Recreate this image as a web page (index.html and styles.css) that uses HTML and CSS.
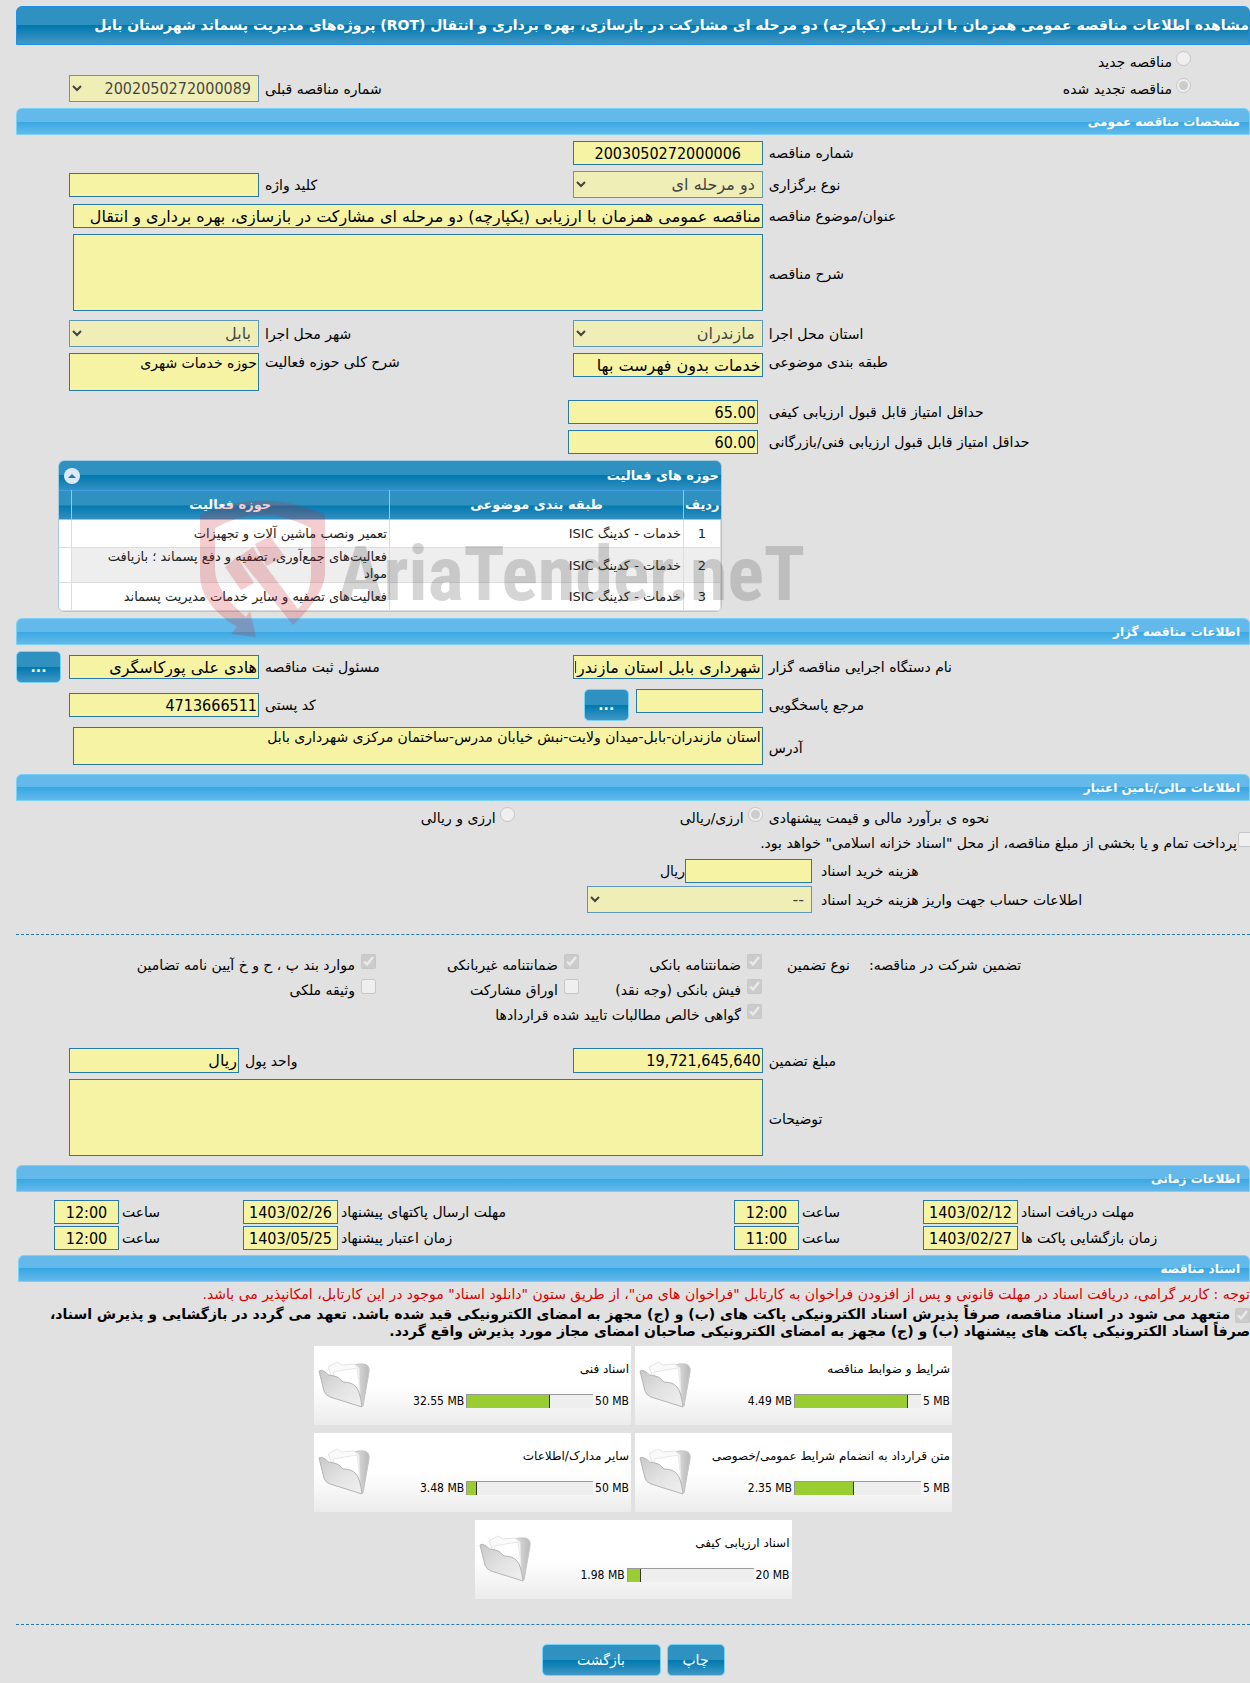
FILE: index.html
```html
<!DOCTYPE html>
<html lang="fa" dir="rtl">
<head>
  <meta charset="UTF-8">
  <title>مشاهده اطلاعات مناقصه</title>
  <meta name="viewport" content="width=device-width, initial-scale=1">
  <link rel="stylesheet" href="styles.css">
</head>
<body>
<main class="page">
  <h1 class="page-title">مشاهده اطلاعات مناقصه عمومی همزمان با ارزیابی (یکپارچه) دو مرحله ای مشارکت در بازسازی، بهره برداری و انتقال (ROT) پروژه‌های مدیریت پسماند شهرستان بابل</h1>

  <!-- نوع مناقصه -->
  <div class="form kind">
    <label class="opt"><input type="radio" name="kind" disabled><span>مناقصه جدید</span></label>
  </div>
  <div class="form kind renewed">
    <label class="opt"><input type="radio" name="kind" checked disabled><span>مناقصه تجدید شده</span></label>
    <label class="lbl second" for="prevNo">شماره مناقصه قبلی</label>
    <select class="num" id="prevNo" disabled><option>2002050272000089</option></select>
  </div>

  <h2 class="section">مشخصات مناقصه عمومی</h2>
  <div class="form">
    <label class="lbl" for="tenderNo">شماره مناقصه</label>
    <input class="num center" id="tenderNo" type="text" value="2003050272000006" readonly>

    <label class="lbl" for="holdType">نوع برگزاری</label>
    <select id="holdType" disabled><option>دو مرحله ای</option></select>
    <label class="lbl second" for="keyword">کلید واژه</label>
    <input id="keyword" type="text" readonly>

    <label class="lbl" for="subject">عنوان/موضوع مناقصه</label>
    <div class="wide"><input id="subject" type="text" value="مناقصه عمومی همزمان با ارزیابی (یکپارچه) دو مرحله ای مشارکت در بازسازی، بهره برداری و انتقال" readonly></div>

    <label class="lbl" for="descr">شرح مناقصه</label>
    <div class="wide"><textarea class="tall" id="descr" readonly></textarea></div>

    <label class="lbl" for="province">استان محل اجرا</label>
    <select id="province" disabled><option>مازندران</option></select>
    <label class="lbl second" for="city">شهر محل اجرا</label>
    <select id="city" disabled><option>بابل</option></select>

    <label class="lbl top" for="topic">طبقه بندی موضوعی</label>
    <input class="top" id="topic" type="text" value="خدمات بدون فهرست بها" readonly>
    <label class="lbl second top" for="field">شرح کلی حوزه فعالیت</label>
    <textarea class="short" id="field" readonly>حوزه خدمات شهری</textarea>

    <label class="lbl" for="minQuality">حداقل امتیاز قابل قبول ارزیابی کیفی</label>
    <input class="num score" id="minQuality" type="text" value="65.00" readonly>

    <label class="lbl" for="minTech">حداقل امتیاز قابل قبول ارزیابی فنی/بازرگانی</label>
    <input class="num score" id="minTech" type="text" value="60.00" readonly>
  </div>

  <!-- حوزه های فعالیت -->
  <div class="grid-box">
    <div class="grid-title">
      <span>حوزه های فعالیت</span>
      <button type="button" class="collapse" aria-label="بستن">
        <svg width="16" height="16" viewBox="0 0 16 16"><circle cx="8" cy="8" r="8" fill="#dbe9f9"/><path d="M4 10l4-4 4 4z" fill="#2779aa"/></svg>
      </button>
    </div>
    <table>
      <thead>
        <tr><th class="c-no">ردیف</th><th class="c-topic">طبقه بندی موضوعی</th><th>حوزه فعالیت</th><th class="c-end"></th></tr>
      </thead>
      <tbody>
        <tr><td class="c-no">1</td><td>خدمات - کدینگ ISIC</td><td>تعمیر ونصب ماشین آلات و تجهیزات</td><td class="c-end"></td></tr>
        <tr class="even"><td class="c-no">2</td><td>خدمات - کدینگ ISIC</td><td>فعالیت‌های جمع‌آوری، تصفیه و دفع پسماند ؛ بازیافت<br>مواد</td><td class="c-end"></td></tr>
        <tr><td class="c-no">3</td><td>خدمات - کدینگ ISIC</td><td>فعالیت‌های تصفیه و سایر خدمات مدیریت پسماند</td><td class="c-end"></td></tr>
      </tbody>
    </table>
    <div class="watermark" dir="ltr">
      <svg width="126" height="140" viewBox="0 0 126 140">
        <path fill="#cc2229" d="M0 15Q62-14 125 15V75C124 88 112 108 93 125L44 64 58 56 98 109Q111 96 111 72V28Q62 2 15 28V70Q16 92 46 117L50 111 56 137 31 134 37 127Q0 104 0 75Z"/>
        <path fill="#cc2229" d="M25 67L37 57 54 83 41 90ZM40 56L53 47 61 61 48 69ZM55 44L70 36 85 57 66 66Z"/>
      </svg>
      <span>AriaTender.neT</span>
    </div>
  </div>

  <h2 class="section">اطلاعات مناقصه گزار</h2>
  <div class="form">
    <label class="lbl" for="org">نام دستگاه اجرایی مناقصه گزار</label>
    <input id="org" type="text" value="شهرداری بابل استان مازندران" readonly>
    <label class="lbl second" for="registrar">مسئول ثبت مناقصه</label>
    <input id="registrar" type="text" value="هادی علی پورکاسگری" readonly>
    <button type="button" class="btn more">...</button>

    <label class="lbl" for="contact">مرجع پاسخگویی</label>
    <div class="contact">
      <input id="contact" type="text" readonly>
      <button type="button" class="btn more">...</button>
    </div>
    <label class="lbl second" for="postal">کد پستی</label>
    <input class="num" id="postal" type="text" value="4713666511" readonly>

    <label class="lbl" for="address">آدرس</label>
    <div class="wide"><textarea class="short" id="address" readonly>استان مازندران-بابل-میدان ولایت-نبش خیابان مدرس-ساختمان مرکزی شهرداری بابل</textarea></div>
  </div>

  <h2 class="section">اطلاعات مالی/تامین اعتبار</h2>
  <div class="form method">
    <span class="lbl">نحوه ی برآورد مالی و قیمت پیشنهادی</span>
    <label class="opt"><input type="radio" name="cur" checked disabled><span>ارزی/ریالی</span></label>
    <label class="opt"><input type="radio" name="cur" disabled><span>ارزی و ریالی</span></label>
  </div>
  <label class="opt treasury"><input type="checkbox" disabled><span>پرداخت تمام و یا بخشی از مبلغ مناقصه، از محل "اسناد خزانه اسلامی" خواهد بود.</span></label>
  <div class="form cost">
    <label class="lbl" for="docCost">هزینه خرید اسناد</label>
    <div class="money"><input id="docCost" type="text" readonly><span>ریال</span></div>
    <label class="lbl" for="account">اطلاعات حساب جهت واریز هزینه خرید اسناد</label>
    <select id="account" disabled><option>--</option></select>
  </div>
  <hr>

  <div class="guarantee">
    <div class="kinds"><span>تضمین شرکت در مناقصه:</span><span>نوع تضمین</span></div>
    <div class="checks">
      <label class="opt"><input type="checkbox" checked disabled><span>ضمانتنامه بانکی</span></label>
      <label class="opt"><input type="checkbox" checked disabled><span>ضمانتنامه غیربانکی</span></label>
      <label class="opt"><input type="checkbox" checked disabled><span>موارد بند پ ، ح و خ آیین نامه تضامین</span></label>
      <label class="opt"><input type="checkbox" checked disabled><span>فیش بانکی (وجه نقد)</span></label>
      <label class="opt"><input type="checkbox" disabled><span>اوراق مشارکت</span></label>
      <label class="opt"><input type="checkbox" disabled><span>وثیقه ملکی</span></label>
      <label class="opt full"><input type="checkbox" checked disabled><span>گواهی خالص مطالبات تایید شده قراردادها</span></label>
    </div>
  </div>
  <div class="form amounts">
    <label class="lbl" for="amount">مبلغ تضمین</label>
    <input class="num" id="amount" type="text" value="19,721,645,640" readonly>
    <label class="lbl second" for="unit">واحد پول</label>
    <input id="unit" type="text" value="ریال" readonly>
    <label class="lbl" for="notes">توضیحات</label>
    <div class="wide full-width"><textarea class="tall" id="notes" readonly></textarea></div>
  </div>

  <h2 class="section">اطلاعات زمانی</h2>
  <div class="times">
    <label for="d1">مهلت دریافت اسناد</label><input class="num" id="d1" type="text" value="1403/02/12" readonly>
    <label for="t1">ساعت</label><input class="num" id="t1" type="text" value="12:00" readonly>
    <label for="d2">مهلت ارسال پاکتهای پیشنهاد</label><input class="num" id="d2" type="text" value="1403/02/26" readonly>
    <label for="t2">ساعت</label><input class="num" id="t2" type="text" value="12:00" readonly>
    <label for="d3">زمان بازگشایی پاکت ها</label><input class="num" id="d3" type="text" value="1403/02/27" readonly>
    <label for="t3">ساعت</label><input class="num" id="t3" type="text" value="11:00" readonly>
    <label for="d4">زمان اعتبار پیشنهاد</label><input class="num" id="d4" type="text" value="1403/05/25" readonly>
    <label for="t4">ساعت</label><input class="num" id="t4" type="text" value="12:00" readonly>
  </div>

  <h2 class="section docs-head">اسناد مناقصه</h2>
  <p class="notice">توجه : کاربر گرامی، دریافت اسناد در مهلت قانونی و پس از افزودن فراخوان به کارتابل "فراخوان های من"، از طریق ستون "دانلود اسناد" موجود در این کارتابل، امکانپذیر می باشد.</p>
  <label class="commit"><input type="checkbox" checked disabled> متعهد می شود در اسناد مناقصه، صرفاً پذیرش اسناد الکترونیکی پاکت های (ب) و (ج) مجهز به امضای الکترونیکی قید شده باشد. تعهد می گردد در بازگشایی و پذیرش اسناد،<br>صرفاً اسناد الکترونیکی پاکت های پیشنهاد (ب) و (ج) مجهز به امضای الکترونیکی صاحبان امضای مجاز مورد پذیرش واقع گردد.</label>

  <!-- پوشه های اسناد -->
  <svg class="defs" width="0" height="0" aria-hidden="true">
    <defs>
      <linearGradient id="front" x1="0" y1="0" x2="1" y2="1">
        <stop offset="0" stop-color="#c8c8c8"/><stop offset="0.5" stop-color="#e2e2e2"/><stop offset="1" stop-color="#f0f0f0"/>
      </linearGradient>
      <linearGradient id="spine" x1="0" y1="0" x2="1" y2="0">
        <stop offset="0" stop-color="#e8e8e8"/><stop offset="1" stop-color="#b8b8b8"/>
      </linearGradient>
      <symbol id="folder" viewBox="0 0 52 48">
        <path d="M34 6Q40 3 46 4Q52 5 51 12L45 46 38 42Z" fill="url(#spine)" stroke="#c4c4c4"/>
        <path d="M10 7L19 2 24 5 36 4 41 8 42 34 20 32Z" fill="#fafafa" stroke="#e4e4e4"/>
        <path d="M15 12L39 8Q42 22 41 36L20 34Z" fill="#fff" stroke="#e8e8e8"/>
        <path d="M1 11Q3 9 7 12Q10 16 16 16Q20 16 25 22Q34 22 38 27Q42 31 44 47L12 37Q7 35 6 31Z" fill="url(#front)" stroke="#b4b4b4"/>
      </symbol>
    </defs>
  </svg>
  <div class="docs">
    <a class="doc" href="#">
      <svg class="folder"><use href="#folder"/></svg>
      <span class="doc-name">شرایط و ضوابط مناقصه</span>
      <span class="usage"><span>4.49 MB</span><span class="bar"><i style="width:90%"></i></span><span>5 MB</span></span>
    </a>
    <a class="doc" href="#">
      <svg class="folder"><use href="#folder"/></svg>
      <span class="doc-name">اسناد فنی</span>
      <span class="usage"><span>32.55 MB</span><span class="bar"><i style="width:66%"></i></span><span>50 MB</span></span>
    </a>
    <a class="doc" href="#">
      <svg class="folder"><use href="#folder"/></svg>
      <span class="doc-name">متن قرارداد به انضمام شرایط عمومی/خصوصی</span>
      <span class="usage"><span>2.35 MB</span><span class="bar"><i style="width:47%"></i></span><span>5 MB</span></span>
    </a>
    <a class="doc" href="#">
      <svg class="folder"><use href="#folder"/></svg>
      <span class="doc-name">سایر مدارک/اطلاعات</span>
      <span class="usage"><span>3.48 MB</span><span class="bar"><i style="width:8%"></i></span><span>50 MB</span></span>
    </a>
    <a class="doc" href="#">
      <svg class="folder"><use href="#folder"/></svg>
      <span class="doc-name">اسناد ارزیابی کیفی</span>
      <span class="usage"><span>1.98 MB</span><span class="bar"><i style="width:11%"></i></span><span>20 MB</span></span>
    </a>
  </div>
  <hr>

  <div class="actions">
    <button type="button" class="btn print">چاپ</button>
    <button type="button" class="btn back">بازگشت</button>
  </div>
</main>
</body>
</html>
```
FILE: styles.css
```css
* { box-sizing: border-box; }
body {
  margin: 0;
  background: #e1e1e1;
  color: #000;
  font-family: "DejaVu Sans", sans-serif;
  font-size: 14px;
  line-height: 18px;
}
.page { padding: 6px 0 6px 16px; overflow: hidden; }
.page-title {
  margin: 0;
  height: 39px;
  line-height: 36px;
  border: 1px solid #1e90e8;
  border-radius: 6px 6px 0 0;
  background: linear-gradient(#2f91bf 50%, #0078ae 50%, #4398c6);
  color: #fff;
  font-size: 14px;
  white-space: nowrap;
}
.section {
  margin: 6px 0;
  height: 27px;
  line-height: 26px;
  padding: 0 9px;
  border: 1px solid #78d2f8;
  border-radius: 6px 6px 0 0;
  background: linear-gradient(#63b9ea 50%, #38a7e2 50%, #64b9ea);
  color: #fff;
  font-size: 12px;
}

/* form grid */
.form {
  display: grid;
  grid-template-columns: 39% 190px 1fr 190px 47px;
  gap: 6px;
  align-items: center;
}
.lbl { grid-column: 1; text-align: left; }
.second { grid-column: 3; }
.wide { grid-column: 2 / 5; padding-left: 4px; }
.full-width { padding-left: 0; }
.top { align-self: start; }

input[type="text"], textarea, select {
  display: block;
  width: 100%;
  height: 24px;
  margin: 0;
  padding: 0 1px;
  border: 1px solid #2779aa;
  border-radius: 0;
  background: #f6f4a4;
  color: #000;
  font-family: inherit;
  font-size: 16px;
  resize: none;
}
textarea { font-size: 14px; line-height: 18px; }
textarea.tall { height: 77px; margin-bottom: 3px; }
textarea.short { height: 38px; margin-bottom: 3px; }
select { height: 27px; padding: 0 3px; opacity: 0.7; }
input.num, select.num { font-family: "DejaVu Sans Condensed", "DejaVu Sans", sans-serif; }
.center { text-align: center; }
.form .score { margin-right: 5px; }

.opt { display: flex; gap: 4px; line-height: 22px; }
input[type="radio"], input[type="checkbox"] {
  width: 15px;
  height: 15px;
  margin: 0;
  flex: none;
}
.kind { margin-top: 6px; }
.kind .opt { padding-right: 59px; }
.kind.renewed { margin-top: 2px; }

/* activity grid */
.grid-box {
  position: relative;
  width: 664px;
  margin: 6px auto 0 42px;
  border: 1px solid #a6c9e2;
  border-radius: 6px;
  background: #fff;
  font-size: 13px;
}
.grid-title {
  display: flex;
  align-items: center;
  justify-content: space-between;
  height: 29px;
  padding: 0 2px 0 5px;
  border-radius: 5px 5px 0 0;
  background: linear-gradient(#2f91bf 50%, #0078ae 50%, #3490c2);
  color: #fff;
  font-weight: bold;
}
.collapse { padding: 0; border: 0; background: none; height: 16px; }
.grid-box table { width: 100%; border-collapse: collapse; table-layout: fixed; }
.grid-box th {
  height: 29px;
  padding: 0;
  border-left: 1px solid #78d2f8;
  border-bottom: 1px solid #78d2f8;
  border-top: 1px solid #3f9fe0;
  background: linear-gradient(#2f91bf 50%, #0078ae 50%, #3490c2);
  color: #fff;
}
.grid-box td { height: 28px; padding: 0 2px; line-height: 17px; border: 1px solid #ddd; color: #222; }
.grid-box .even td { background: #eee; }
.grid-box .even .c-end { background: #fff; }
.grid-box .c-no { width: 37px; text-align: center; }
.grid-box .c-topic { width: 294px; }
.grid-box .c-end { width: 12px; border-left: 0; }
.watermark {
  position: absolute;
  left: 141px;
  top: 39px;
  display: flex;
  align-items: center;
  gap: 12px;
  opacity: 0.22;
  pointer-events: none;
}
.watermark span {
  padding-top: 8px;
  font-family: "Liberation Sans Narrow", "Roboto Condensed", "Liberation Sans", sans-serif;
  font-size: 76px;
  line-height: 76px;
  font-weight: bold;
  color: #444;
}

.btn {
  height: 32px;
  padding: 0;
  border: 1px solid #78d2f8;
  border-radius: 5px;
  background: linear-gradient(#2f91bf 50%, #0078ae 50%, #3f97c6);
  color: #fff;
  font-family: inherit;
  font-size: 14px;
}
.more { width: 45px; font-weight: bold; justify-self: end; }
.contact { display: flex; gap: 7px; }
.contact input { width: 127px; flex: none; }

.form.method { grid-template-columns: 39% 242px 1fr; }
.treasury { margin: 3px -3px 5px 0; gap: 1px; }
.money { display: flex; align-items: center; }
.money input { width: 127px; flex: none; }
.form.cost { grid-template-columns: 429px 225px; gap: 3px 9px; }
hr { margin: 21px 0 19px; border: 0; border-top: 1px dashed #2779aa; }

.guarantee { display: grid; grid-template-columns: 463px 1fr; column-gap: 25px; }
.kinds { display: flex; justify-content: flex-end; gap: 19px; line-height: 22px; }
.checks { display: grid; grid-template-columns: 183px 203px 1fr; row-gap: 3px; }
.checks .opt { gap: 6px; }
.checks .full { grid-column: 1 / 4; }
.amounts { margin-top: 22px; grid-template-columns: 39% 190px 1fr 170px 47px; }
.amounts input[type="text"] { height: 25px; }

.times {
  display: grid;
  grid-template-columns: 229px 95px 118px 65px 1fr 95px 118px 65px;
  gap: 2px 3px;
  align-items: center;
  padding: 2px 0 0 38px;
}
.times input { text-align: center; }
.times label { text-align: left; }
.docs-head { margin: 5px 0 3px 2px; }
.notice { margin: 0 0 3px; color: #d80000; white-space: nowrap; }
.commit { display: block; font-weight: bold; line-height: 17px; }
.commit input { vertical-align: middle; }

.defs { position: absolute; }
.docs { display: flex; flex-wrap: wrap; justify-content: center; gap: 8px 4px; max-width: 640px; margin: 6px auto 25px; }
.doc {
  display: grid;
  grid-template-columns: 1fr 54px;
  grid-template-rows: 18px 1fr;
  width: 317px;
  height: 79px;
  padding: 14px 2px 2px;
  background: linear-gradient(#fff 50%, #ececec);
  color: #000;
  font-size: 12px;
  text-decoration: none;
}
.folder { width: 52px; height: 48px; grid-column: 2; grid-row: 1 / 3; }
.doc-name { grid-column: 1; grid-row: 1; }
.usage {
  display: flex;
  align-items: center;
  justify-content: flex-end;
  gap: 2px;
  grid-column: 1;
  grid-row: 2;
  direction: ltr;
  font-family: "DejaVu Sans Condensed", "DejaVu Sans", sans-serif;
}
.bar { width: 127px; height: 14px; background: #eee; border-top: 1px solid #999; border-left: 1px solid #999; }
.bar i { display: block; height: 100%; background: #9acd32; border-right: 1px solid #333; }
.actions { display: flex; justify-content: center; gap: 6px; }
.print { width: 58px; }
.back { width: 119px; }
```
